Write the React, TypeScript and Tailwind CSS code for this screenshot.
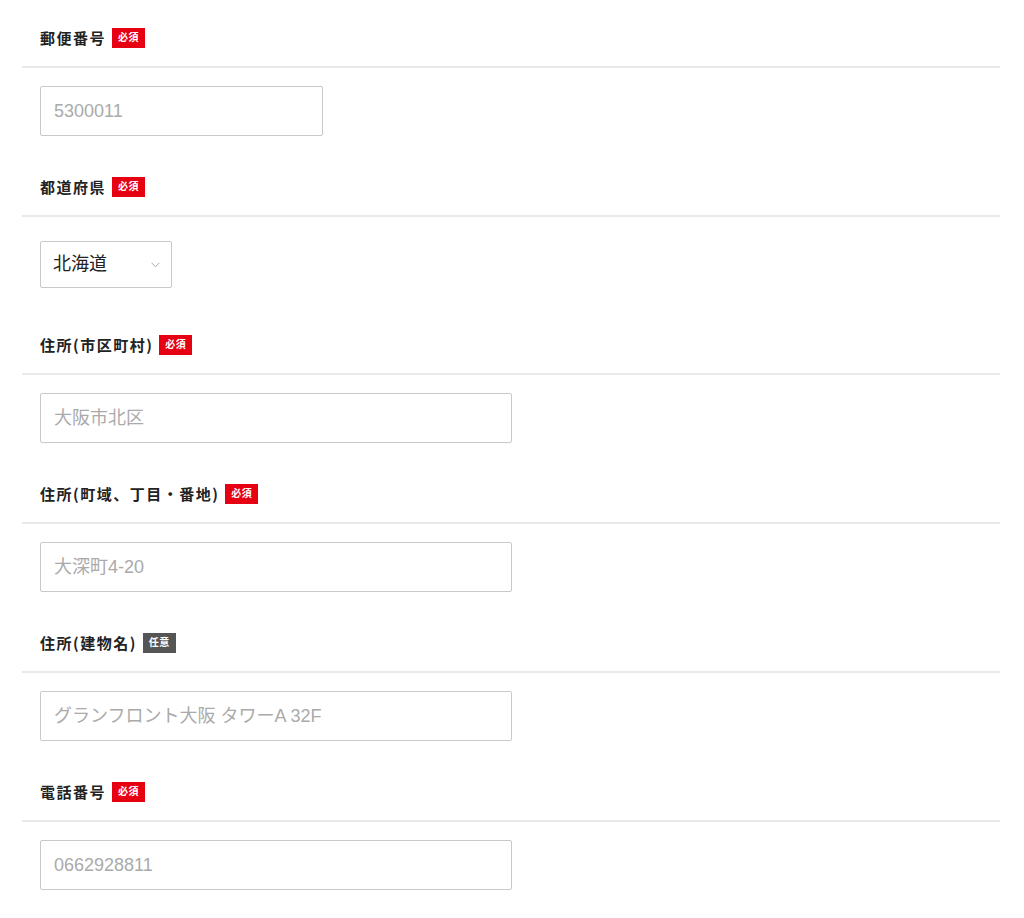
import React from "react";

type Field = {
  label: string;
  required: boolean;
  placeholder?: string;
  width: string;
  select?: boolean;
};

const fields: Field[] = [
  { label: "郵便番号", required: true, placeholder: "5300011", width: "w-[283px]" },
  { label: "都道府県", required: true, select: true, width: "w-[132px]" },
  { label: "住所(市区町村)", required: true, placeholder: "大阪市北区", width: "w-[472px]" },
  { label: "住所(町域、丁目・番地)", required: true, placeholder: "大深町4-20", width: "w-[472px]" },
  { label: "住所(建物名)", required: false, placeholder: "グランフロント大阪 タワーA 32F", width: "w-[472px]" },
  { label: "電話番号", required: true, placeholder: "0662928811", width: "w-[472px]" },
];

const prefectures = ["北海道", "青森県", "岩手県", "宮城県", "秋田県", "山形県", "福島県", "東京都", "大阪府"];

function Badge({ required }: { required: boolean }) {
  return (
    <span
      className={`ml-[6px] inline-flex h-[20px] items-center px-[6px] text-[10px] font-bold leading-none tracking-[0.05em] text-white ${
        required ? "bg-[#e60012]" : "bg-[#555555]"
      }`}
    >
      {required ? "必須" : "任意"}
    </span>
  );
}

function FormRow({ field }: { field: Field }) {
  return (
    <div>
      {/* label row */}
      <div className="flex h-[58px] items-center border-b-2 border-[#e9e9e9] pl-[18px]">
        <span
          className="text-[15px] font-bold tracking-[0.1em] text-[#222222]"
          style={{ fontFamily: '"Noto Sans CJK JP", "Liberation Sans", sans-serif' }}
        >
          {field.label}
        </span>
        <Badge required={field.required} />
      </div>

      {field.select ? (
        <div className="pb-[29px] pl-[18px] pt-[24px]">
          <div className={`relative h-[47px] ${field.width}`}>
            <select
              defaultValue="北海道"
              className="h-full w-full appearance-none rounded-[2px] border border-[#c9c9c9] bg-white pl-[12px] pr-[28px] text-[18px] text-[#222222] outline-none"
            >
              {prefectures.map((p) => (
                <option key={p} value={p}>
                  {p}
                </option>
              ))}
            </select>
            <svg
              className="pointer-events-none absolute right-[12px] top-[21px]"
              width="9"
              height="6"
              viewBox="0 0 9 6"
              fill="none"
            >
              <path d="M0.5 0.8 L4.5 4.8 L8.5 0.8" stroke="#a8a8a8" strokeWidth="1" />
            </svg>
          </div>
        </div>
      ) : (
        <div className="pb-[23px] pl-[18px] pt-[18px]">
          <input
            type="text"
            placeholder={field.placeholder}
            className={`h-[50px] ${field.width} rounded-[2px] border border-[#c9c9c9] bg-white px-[13px] text-[18px] text-[#222222] outline-none placeholder:text-[#aaaaaa]`}
          />
        </div>
      )}
    </div>
  );
}

export default function App() {
  return (
    <main
      className="min-h-screen bg-white pl-[22px] pr-[24px] pt-[10px]"
      style={{ fontFamily: '"Liberation Sans", "Noto Sans CJK JP", sans-serif' }}
    >
      {fields.map((f) => (
        <FormRow key={f.label} field={f} />
      ))}
    </main>
  );
}
